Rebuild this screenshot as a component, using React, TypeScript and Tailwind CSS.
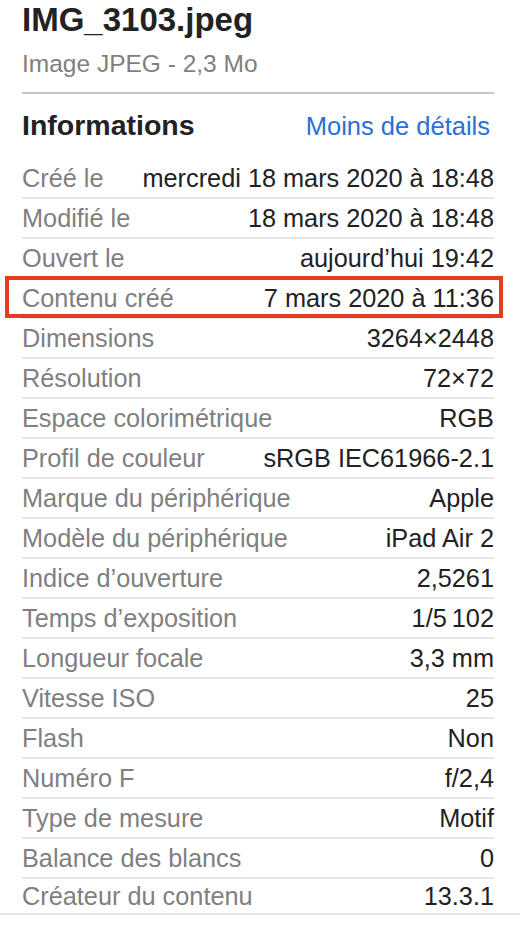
import React from "react";

const rows: [string, string][] = [
  ["Créé le", "mercredi 18 mars 2020 à 18:48"],
  ["Modifié le", "18 mars 2020 à 18:48"],
  ["Ouvert le", "aujourd’hui 19:42"],
  ["Contenu créé", "7 mars 2020 à 11:36"],
  ["Dimensions", "3264×2448"],
  ["Résolution", "72×72"],
  ["Espace colorimétrique", "RGB"],
  ["Profil de couleur", "sRGB IEC61966-2.1"],
  ["Marque du périphérique", "Apple"],
  ["Modèle du périphérique", "iPad Air 2"],
  ["Indice d’ouverture", "2,5261"],
  ["Temps d’exposition", "1/5\u202F102"],
  ["Longueur focale", "3,3 mm"],
  ["Vitesse ISO", "25"],
  ["Flash", "Non"],
  ["Numéro F", "f/2,4"],
  ["Type de mesure", "Motif"],
  ["Balance des blancs", "0"],
  ["Créateur du contenu", "13.3.1"],
];

export default function App() {
  return (
    <div
      className="w-[520px] h-[930px] bg-white overflow-hidden"
      style={{ fontFamily: '"Liberation Sans", Arial, Helvetica, sans-serif' }}
    >
      <div className="pl-[22px] pr-[26px]">
        <div className="text-[33px] leading-[40px] font-bold text-[#222222]">IMG_3103.jpeg</div>
        <div className="mt-[9px] text-[24.5px] leading-[30px] text-[#7f7f7f]">Image JPEG - 2,3 Mo</div>
        <div className="mt-[13px] h-[2px] bg-[#c6c6c6]" />
        <div className="mt-[13px] flex items-baseline justify-between">
          <div className="text-[28.5px] leading-[36px] font-bold text-[#222222]">Informations</div>
          <div className="text-[25.5px] leading-[36px] text-[#2c6fd6] pr-[4px]">Moins de détails</div>
        </div>
        <div className="mt-[15px] flex flex-col">
          {rows.map(([label, value], i) => {
            const last = i === rows.length - 1;
            const highlighted = i === 3;
            return (
              <div
                key={label}
                className={
                  last
                    ? "relative flex items-center justify-between h-[34px]"
                    : "relative flex items-center justify-between h-[40px] border-b-2 border-[#e6e6e6]"
                }
              >
                <span className="text-[25.3px] leading-[38px] text-[#808080] whitespace-nowrap">{label}</span>
                <span className="text-[25.3px] leading-[38px] text-[#222222] whitespace-nowrap">{value}</span>
                {highlighted && (
                  <div className="absolute left-[-17px] right-[-9px] top-[-3px] bottom-[-1px] border-[4px] border-[#e23c23] pointer-events-none" />
                )}
              </div>
            );
          })}
        </div>
      </div>
      <div className="h-[2px] bg-[#e3e3e3]" />
    </div>
  );
}
